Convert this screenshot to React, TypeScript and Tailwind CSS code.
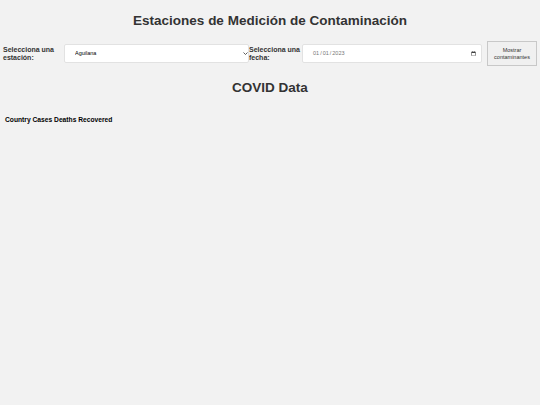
import React from 'react'

const font = { fontFamily: '"Liberation Sans", Arial, sans-serif' }

const Chevron = () => (
  <svg viewBox="0 0 10 6" className="pointer-events-none absolute right-[1px] top-[8px] h-[3px] w-[5px]">
    <path d="M1 1l4 4 4-4" fill="none" stroke="#333" strokeWidth="1.6" />
  </svg>
)

export default function App() {
  return (
    <div className="min-h-screen w-full bg-[#f2f2f2] text-[#333]" style={font}>
      <h1 className="pt-[12px] text-center text-[13.5px] font-bold leading-[17px]">
        Estaciones de Medición de Contaminación
      </h1>
      <div className="mt-[12px] flex items-center pl-[3px] pr-[3px]">
        <label className="w-[61px] text-[7px] font-bold leading-[8px]">
          Selecciona una estación:
        </label>
        <div className="relative flex">
          <select
            defaultValue="Aguilana"
            className="h-[19px] w-[185px] appearance-none rounded-[2px] border border-[#e2e2e2] bg-white pl-[10px] text-[5.5px] text-black"
          >
            <option>Aguilana</option>
          </select>
          <Chevron />
        </div>
        <label className="w-[53px] text-[7px] font-bold leading-[8px]">
          Selecciona una fecha:
        </label>
        <input
          type="date"
          defaultValue="2023-01-01"
          className="h-[19px] w-[180px] rounded-[2px] border border-[#e2e2e2] bg-white pl-[9px] pr-[3px] text-[5.5px] text-[#777]"
        />
        <button className="ml-[5px] h-[25px] w-[50px] border border-[#c8c8c8] bg-[#f0f0f0] text-[5.5px] leading-[7px] text-[#333]">
          Mostrar
          <br />
          contaminantes
        </button>
      </div>
      <h2 className="mt-[13px] text-center text-[13.5px] font-bold leading-[17px]">COVID Data</h2>
      <table className="mt-[19px] ml-[5px] text-[6.7px] font-bold text-black">
        <thead>
          <tr>
            <th className="px-0">Country Cases Deaths Recovered</th>
          </tr>
        </thead>
      </table>
    </div>
  )
}
